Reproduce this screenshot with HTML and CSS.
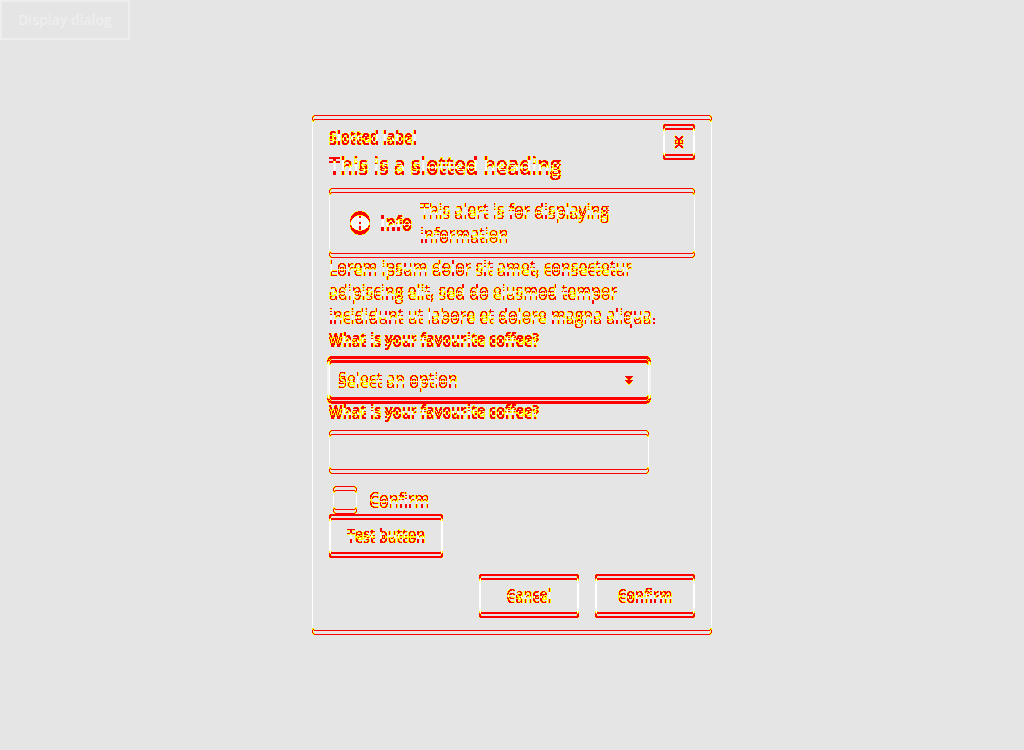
FILE: index.html
```
<!DOCTYPE html>
<html lang="en">
<head>
<meta charset="utf-8">
<meta name="viewport" content="width=device-width, initial-scale=1">
<title>Dialog</title>
<link rel="stylesheet" href="styles.css">
</head>
<body>
<svg class="defs" width="0" height="0" aria-hidden="true">
  <!-- Compares the content with a copy of itself four pixels lower -->
  <filter id="difference" x="-5%" y="-5%" width="110%" height="110%" color-interpolation-filters="sRGB">
    <feOffset in="SourceAlpha" dy="4" result="moved"/>
    <feComposite in="SourceAlpha" in2="moved" operator="arithmetic" k2="1" k3="-1" result="lost"/>
    <feComposite in="moved" in2="SourceAlpha" operator="arithmetic" k2="1" k3="-1" result="added"/>
    <feComposite in="lost" in2="added" operator="arithmetic" k2="1" k3="1" result="delta"/>
    <feComponentTransfer in="delta" result="soft"><feFuncA type="linear" slope="200" intercept="-12"/></feComponentTransfer>
    <feComponentTransfer in="delta" result="hard"><feFuncA type="linear" slope="200" intercept="-116"/></feComponentTransfer>
    <feFlood flood-color="#ffff00"/><feComposite in2="soft" operator="in" result="yellow"/>
    <feFlood flood-color="#ff0000"/><feComposite in2="hard" operator="in" result="red"/>
    <feComposite in="SourceAlpha" in2="moved" operator="in" result="same"/>
    <feFlood flood-color="#ffffff"/><feComposite in2="same" operator="in" result="white"/>
    <feMerge><feMergeNode in="white"/><feMergeNode in="yellow"/><feMergeNode in="red"/></feMerge>
  </filter>
</svg>
<button class="button trigger" type="button">Display dialog</button>
<div class="backdrop">
  <section class="dialog" role="dialog" aria-labelledby="heading">
    <header class="header">
      <div>
        <p class="label">Slotted label</p>
        <h2 class="heading" id="heading">This is a slotted heading</h2>
      </div>
      <button class="close" type="button" aria-label="Close">
        <svg width="10" height="10" viewBox="0 0 10 10"><path d="M1 1l8 8M9 1L1 9" fill="none" stroke="currentColor" stroke-width="1.7"/></svg>
      </button>
    </header>
    <div class="alert" role="status">
      <svg class="alert-icon" width="20" height="20" viewBox="0 0 20 20" aria-hidden="true"><path fill-rule="evenodd" fill="currentColor" d="M10 0a10 10 0 1 1 0 20a10 10 0 0 1 0-20zM9 5v2h2V5zM9 9v6h2V9z"/></svg>
      <strong class="alert-title">Info</strong>
      <p class="alert-text">This alert is for displaying information</p>
    </div>
    <p class="text">Lorem ipsum dolor sit amet, consectetur adipiscing elit, sed do eiusmod tempor incididunt ut labore et dolore magna aliqua.</p>
    <label class="label" for="coffee">What is your favourite coffee?</label>
    <div class="select-box">
      <select class="field select" id="coffee"><option>Select an option</option></select>
      <svg class="chevron" width="8" height="5" viewBox="0 0 8 5" aria-hidden="true"><path d="M0 0h8L4 5z" fill="currentColor"/></svg>
    </div>
    <label class="label" for="coffee-text">What is your favourite coffee?</label>
    <input class="field" id="coffee-text" type="text">
    <div class="check-row">
      <input class="check" id="confirm" type="checkbox">
      <label for="confirm">Confirm</label>
    </div>
    <button class="button" type="button">Test button</button>
    <footer class="footer">
      <button class="button" type="button">Cancel</button>
      <button class="button" type="button">Confirm</button>
    </footer>
  </section>
</div>
</body>
</html>
```
FILE: styles.css
```
* { box-sizing: border-box; }
body {
  margin: 0;
  background: #e5e5e5;
  color: #fff;
  font: 16px/24px "Open Sans", "Noto Sans", sans-serif;
}
p, h2 { margin: 0; }
.defs { position: absolute; }
.button {
  height: 40px;
  min-width: 100px;
  padding: 0 16px;
  border: 2px solid currentColor;
  border-radius: 3px;
  background: transparent;
  color: inherit;
  font: 600 14px/24px "Open Sans", "Noto Sans", sans-serif;
}
.trigger {
  display: block;
  border-radius: 0;
  color: #eee;
}
.backdrop {
  position: fixed;
  inset: 0;
  display: flex;
  align-items: center;
  justify-content: center;
  padding-bottom: 4px;
}
.dialog {
  width: 400px;
  max-width: 100%;
  padding: 8px 16px 16px;
  border: 1px solid;
  border-radius: 3px;
  filter: url(#difference);
}
.header {
  display: flex;
  justify-content: space-between;
  align-items: flex-start;
  padding-bottom: 8px;
}
.label {
  display: block;
  font-size: 14px;
  font-weight: 700;
}
.heading {
  font-size: 20px;
  line-height: 32px;
  font-weight: 600;
}
.close {
  display: flex;
  align-items: center;
  justify-content: center;
  width: 32px;
  height: 32px;
  padding: 0;
  border: 2px solid;
  border-radius: 3px;
  background: transparent;
  color: inherit;
}
.alert {
  display: flex;
  align-items: center;
  padding: 8px 20px;
  border: 1px solid;
  border-radius: 3px;
}
.alert-icon { flex: none; }
.alert-title {
  margin: 0 8px 0 10px;
  font-size: 16px;
}
.alert-text { max-width: 220px; }
.field {
  display: block;
  width: 320px;
  max-width: 100%;
  height: 40px;
  margin-top: 8px;
  padding: 0 8px;
  border: 1px solid #fff;
  border-radius: 3px;
  background: transparent;
  color: inherit;
  font: inherit;
}
.select-box {
  display: flex;
  align-items: center;
}
.select {
  appearance: none;
  flex: none;
  outline: 2px solid rgba(255, 255, 255, 0.75);
}
.chevron {
  margin: 8px 0 0 -24px;
  pointer-events: none;
}
.check-row {
  display: flex;
  align-items: center;
  gap: 12px;
  height: 32px;
  margin: 12px 0 0 4px;
}
.check {
  appearance: none;
  width: 24px;
  height: 24px;
  margin: 0;
  border: 1px solid;
  border-radius: 3px;
}
.footer {
  display: flex;
  justify-content: flex-end;
  gap: 16px;
  margin-top: 20px;
}
```
